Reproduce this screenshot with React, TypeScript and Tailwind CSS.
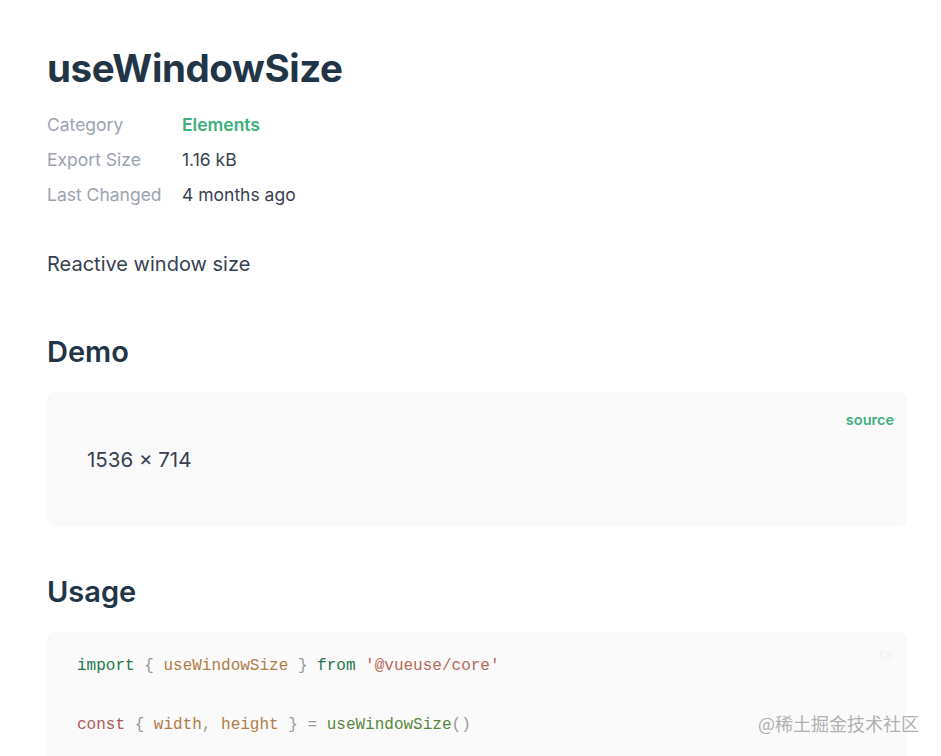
const meta = [
  { label: "Category", value: "Elements", accent: true },
  { label: "Export Size", value: "1.16 kB" },
  { label: "Last Changed", value: "4 months ago" },
];

export default function App() {
  return (
    <div className="relative h-[756px] overflow-hidden bg-white font-['Inter',sans-serif] text-[#213547]">
      <div className="pl-[47px] pr-[34px] pt-[45px]">
        {/* Title */}
        <h1 className="text-[38.5px] font-bold leading-[46px] tracking-[-0.4px] text-[#213547]">
          useWindowSize
        </h1>

        {/* Meta */}
        <div className="mt-[22px] flex flex-col gap-[11px] text-[17.5px] leading-[24px]">
          {meta.map((row) => (
            <div key={row.label} className="flex">
              <span className="w-[135px] text-[#9ca3af]">{row.label}</span>
              <span className={row.accent ? "font-semibold text-[#3eaf7c]" : "text-[#374151]"}>
                {row.value}
              </span>
            </div>
          ))}
        </div>

        <p className="mt-[43px] text-[20px] leading-[28px] text-[#374151]">Reactive window size</p>

        {/* Demo */}
        <h2 className="mt-[56px] text-[29px] font-semibold leading-[36px]">Demo</h2>
        <div className="relative mt-[22px] h-[135px] rounded-lg bg-[#fafafa] pl-[40px] pt-[53px]">
          <span className="absolute right-[13px] top-[17px] text-[14.5px] font-semibold text-[#3eaf7c]">
            source
          </span>
          <span className="text-[20.5px] text-[#374151]">1536 × 714</span>
        </div>

        {/* Usage */}
        <h2 className="mt-[47px] text-[29px] font-semibold leading-[36px]">Usage</h2>
        <div className="relative mt-[22px] rounded-lg bg-[#fafafa] pl-[30px] pt-[20px] pb-[20px] font-['Liberation_Mono',monospace] text-[16px] leading-[29.5px]">
          <span className="absolute right-[14px] top-[10px] text-[12px] text-[#f0f0f0]">ts</span>
          <div>
            <span className="text-[#1e754f]">import</span>
            <span className="text-[#999999]"> {"{"} </span>
            <span className="text-[#b07d48]">useWindowSize</span>
            <span className="text-[#999999]"> {"}"} </span>
            <span className="text-[#1e754f]">from</span>{" "}
            <span className="text-[#b56959]">'@vueuse/core'</span>
          </div>
          <div>&nbsp;</div>
          <div>
            <span className="text-[#ab5959]">const</span>
            <span className="text-[#999999]"> {"{"} </span>
            <span className="text-[#b07d48]">width</span>
            <span className="text-[#999999]">, </span>
            <span className="text-[#b07d48]">height</span>
            <span className="text-[#999999]"> {"}"} = </span>
            <span className="text-[#59873a]">useWindowSize</span>
            <span className="text-[#999999]">()</span>
          </div>
        </div>
      </div>

      {/* watermark */}
      <span className="absolute left-[758px] top-[710px] font-['Noto_Sans_CJK_SC',sans-serif] text-[18px] text-[#b0b0b0]">
        @稀土掘金技术社区
      </span>
    </div>
  );
}
